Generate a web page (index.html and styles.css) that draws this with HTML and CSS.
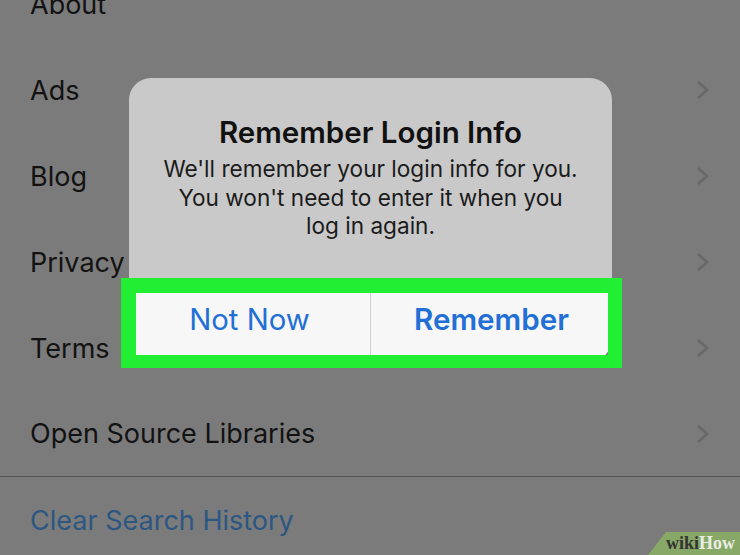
FILE: index.html
```html
<!DOCTYPE html>
<html lang="en">
<head>
  <meta charset="UTF-8">
  <title>Remember Login Info</title>
  <link rel="stylesheet" href="styles.css">
</head>
<body>

  <div class="screen">
    <ul class="menu">
      <li class="row"><span>About</span></li>
      <li class="row"><span>Ads</span><svg class="chev" viewBox="0 0 14 20"><polyline points="2,2 11,10 2,18"/></svg></li>
      <li class="row"><span>Blog</span><svg class="chev" viewBox="0 0 14 20"><polyline points="2,2 11,10 2,18"/></svg></li>
      <li class="row"><span>Privacy</span><svg class="chev" viewBox="0 0 14 20"><polyline points="2,2 11,10 2,18"/></svg></li>
      <li class="row"><span>Terms</span><svg class="chev" viewBox="0 0 14 20"><polyline points="2,2 11,10 2,18"/></svg></li>
      <li class="row"><span>Open Source Libraries</span><svg class="chev" viewBox="0 0 14 20"><polyline points="2,2 11,10 2,18"/></svg></li>
      <li class="row row-link"><span>Clear Search History</span></li>
    </ul>

    <div class="alert">
      <div class="alert-body">
        <div class="alert-title">Remember Login Info</div>
        <p class="alert-text">We'll remember your login info for you.<br>You won't need to enter it when you<br>log in again.</p>
      </div>
      <div class="alert-actions">
        <div class="action">Not Now</div>
        <div class="action action-main">Remember</div>
      </div>
    </div>

    <div class="highlight"></div>

    <div class="badge"><span class="wiki">wiki</span><span class="how">How</span></div>
  </div>

</body>
</html>
```

FILE: styles.css
```css
* {
  box-sizing: border-box;
}

body {
  margin: 0;
  font-family: Inter, 'Liberation Sans', sans-serif;
  background: #7b7b7b;
}

.screen {
  position: relative;
  width: 740px;
  height: 555px;
  overflow: hidden;
  background: #7b7b7b;
}

.menu {
  list-style: none;
  margin: -39px 0 0 0;
  padding: 0;
}

.row {
  display: flex;
  align-items: center;
  justify-content: space-between;
  height: 86px;
  padding: 0 30px 0 30px;
  font-size: 27px;
  color: #121212;
}

.row:nth-child(6) {
  border-bottom: 1px solid #555;
}

.row-link {
  color: #2c5782;
}

.chev {
  width: 14px;
  height: 20px;
  fill: none;
  stroke: #686868;
  stroke-width: 2.6;
}

/* alert */
.alert {
  position: absolute;
  left: 129px;
  top: 78px;
  width: 483px;
  height: 283px;
  border-radius: 22px;
  background: #c9c9c9;
  overflow: hidden;
  display: flex;
  flex-direction: column;
}

.alert-body {
  flex: 1;
  text-align: center;
  padding-top: 36px;
}

.alert-title {
  font-size: 29.5px;
  font-weight: 600;
  color: #111;
}

.alert-text {
  margin: 5px 0 0;
  font-size: 22.6px;
  line-height: 28.5px;
  color: #1b1b1b;
}

.alert-actions {
  display: flex;
  height: 68px;
  background: #f7f7f7;
}

.action {
  flex: 1;
  display: flex;
  align-items: center;
  justify-content: center;
  padding-bottom: 16px;
  font-size: 29.3px;
  color: #2270d6;
}

.action:first-child {
  border-right: 1px solid #d0d0d0;
}

.action-main {
  font-weight: 600;
  font-size: 29.6px;
}

.highlight {
  position: absolute;
  left: 121px;
  top: 278px;
  width: 501px;
  height: 90px;
  border: solid #22ef33;
  border-width: 15px 14px 13px 15px;
}

/* watermark */
.badge {
  position: absolute;
  right: 0;
  bottom: 0;
  width: 92px;
  height: 23px;
  padding: 1px 5px 0 0;
  background: #87a866;
  clip-path: polygon(18px 0, 100% 0, 100% 100%, 0 100%);
  font-family: 'Liberation Serif', 'DejaVu Serif', serif;
  font-weight: bold;
  font-size: 18px;
  line-height: 20px;
  text-align: right;
  white-space: nowrap;
}

.wiki {
  color: #333;
}

.how {
  color: #e9ede4;
}
```
